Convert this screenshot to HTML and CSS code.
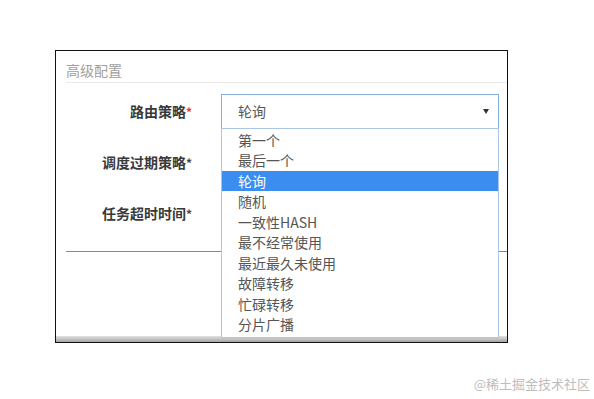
FILE: index.html
```html
<!DOCTYPE html>
<html lang="zh-CN">
<head>
    <meta charset="UTF-8">
    <title>高级配置</title>
    <link rel="stylesheet" href="styles.css">
</head>
<body>
    <div class="frame">
        <div class="fieldset">
            <div class="legend">高级配置</div>
            <div class="row">
                <label class="label">路由策略<span class="req red">*</span></label>
                <div class="select-wrap">
                    <div class="select">
                        <span>轮询</span>
                        <span class="arrow"></span>
                    </div>
                    <ul class="options">
                        <li>第一个</li>
                        <li>最后一个</li>
                        <li class="selected">轮询</li>
                        <li>随机</li>
                        <li>一致性HASH</li>
                        <li>最不经常使用</li>
                        <li>最近最久未使用</li>
                        <li>故障转移</li>
                        <li>忙碌转移</li>
                        <li>分片广播</li>
                    </ul>
                </div>
            </div>
            <div class="row">
                <label class="label">调度过期策略<span class="req">*</span></label>
            </div>
            <div class="row">
                <label class="label">任务超时时间<span class="req">*</span></label>
            </div>
            <div class="footer"></div>
        </div>
        <div class="bottom-bar"></div>
    </div>
    <div class="watermark">@稀土掘金技术社区</div>
</body>
</html>
```

FILE: styles.css
```css
body {
    margin: 0;
    padding: 50px 0 0 55px;
    background: #ffffff;
    font-family: "Noto Sans CJK SC", "Liberation Sans", sans-serif;
    font-size: 14px;
}
.frame {
    width: 451px;
    height: 291px;
    border: 1.5px solid #111;
    display: flex;
    flex-direction: column;
}
.fieldset {
    flex: 1;
    margin-left: 10px;
}
.legend {
    height: 31px;
    line-height: 38px;
    color: #a0a0a0;
    border-bottom: 1px solid #ebebeb;
}
.row {
    display: flex;
    align-items: center;
    height: 36px;
    margin-top: 15px;
}
.legend + .row {
    margin-top: 10px;
}
.label {
    width: 126px;
    text-align: right;
    font-weight: bold;
    color: #3a3a3a;
    margin-right: 29px;
}
.req {
    font-size: 12px;
    color: #444;
}
.req.red {
    color: #e33;
}
.select-wrap {
    position: relative;
    width: 278px;
}
.select {
    height: 33px;
    border: 1px solid #86b3dc;
    display: flex;
    align-items: center;
    justify-content: space-between;
    padding: 0 9px 0 16px;
    color: #555;
}
.arrow {
    width: 0;
    height: 0;
    border-left: 3px solid transparent;
    border-right: 3px solid transparent;
    border-top: 5px solid #333;
}
.options {
    position: absolute;
    top: 34px;
    left: 0;
    width: 276px;
    margin: 0;
    padding: 1px 0 2px;
    list-style: none;
    background: #fff;
    border: 1px solid #aac6e6;
    z-index: 2;
}
.options li {
    height: 20.5px;
    line-height: 20.5px;
    padding-left: 16px;
    color: #555;
}
.options li.selected {
    background: #3b8ef0;
    color: #fff;
}
.footer {
    margin-top: 20px;
    border-top: 1px solid #8a8a8a;
}
.bottom-bar {
    height: 6px;
    background: linear-gradient(#e2e2e2, #a4a4a4);
}
.watermark {
    width: 535px;
    margin-top: 31px;
    text-align: right;
    color: #bdbdbd;
    font-size: 13px;
}
```
